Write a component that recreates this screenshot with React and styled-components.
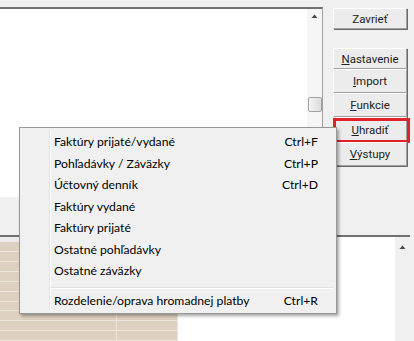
import React from "react";
import styled, { createGlobalStyle } from "styled-components";

const menuItems = [
  { label: "Faktúry prijaté/vydané", key: "Ctrl+F" },
  { label: "Pohľadávky / Záväzky", key: "Ctrl+P" },
  { label: "Účtovný denník", key: "Ctrl+D" },
  { label: "Faktúry vydané" },
  { label: "Faktúry prijaté" },
  { label: "Ostatné pohľadávky" },
  { label: "Ostatné záväzky" },
  { separator: true },
  { label: "Rozdelenie/oprava hromadnej platby", key: "Ctrl+R" },
];

function UpArrow() {
  return (
    <svg width="7" height="4" viewBox="0 0 7 4">
      <path d="M0.5 4 L3.5 0.5 L6.5 4 Z" fill="#4a4a4a" />
    </svg>
  );
}

export default function App() {
  return (
    <Frame>
      <GlobalStyle />
      <TopRow>
        <ListPanel>
          <ScrollBar>
            <UpArrow />
            <Thumb />
          </ScrollBar>
        </ListPanel>
        <ButtonColumn>
          <Button>Zavrieť</Button>
          <ButtonStack>
            <Button><u>N</u>astavenie</Button>
            <Button><u>I</u>mport</Button>
            <Button><u>F</u>unkcie</Button>
            <Button $marked><u>U</u>hradiť</Button>
            <Button><u>V</u>ýstupy</Button>
          </ButtonStack>
        </ButtonColumn>
      </TopRow>

      <LowerPanel>
        <Table>
          <TableHead />
          {Array.from({ length: 10 }).map((_, i) => (
            <TableRow key={i}>
              <Cell />
              <Cell />
            </TableRow>
          ))}
        </Table>
        <Filler />
        <LowerScroll>
          <UpArrow />
        </LowerScroll>
      </LowerPanel>

      <Menu>
        {menuItems.map((item, i) =>
          item.separator ? (
            <Separator key={i} />
          ) : (
            <MenuItem key={i}>
              <span>{item.label}</span>
              <Shortcut>{item.key}</Shortcut>
            </MenuItem>
          )
        )}
      </Menu>
    </Frame>
  );
}

// ...............styled-components..........//

const GlobalStyle = createGlobalStyle`
  body {
    margin: 0;
    background: #f0f0f0;
    font-family: "Liberation Sans", Arial, sans-serif;
  }
`;

const Frame = styled.div`
  position: relative;
  width: 414px;
  height: 341px;
  overflow: hidden;
  background: #f0f0f0;
`;

const TopRow = styled.div`
  display: flex;
  height: 197px;
`;

const ListPanel = styled.div`
  box-sizing: border-box;
  margin-top: 7px;
  width: 323px;
  height: 190px;
  background: #fff;
  border-top: 2px solid #707070;
  border-right: 1px solid #a0a0a0;
  display: flex;
  justify-content: flex-end;
`;

const ScrollBar = styled.div`
  width: 15px;
  background: #f6f6f6;
  display: flex;
  flex-direction: column;
  align-items: center;
  padding-top: 5px;
`;

const Thumb = styled.div`
  box-sizing: border-box;
  margin-top: 79px;
  width: 14px;
  height: 15px;
  border: 1px solid #a2a2a2;
  border-radius: 2px;
  background: linear-gradient(90deg, #f4f4f4, #dcdcdc);
`;

const ButtonColumn = styled.div`
  display: flex;
  flex-direction: column;
  padding: 8px 0 0 10px;
`;

const ButtonStack = styled.div`
  display: flex;
  flex-direction: column;
  margin-top: 19px;
`;

const Button = styled.div`
  position: relative;
  box-sizing: border-box;
  width: 74px;
  height: ${(p) => (p.$marked ? "25px" : "24px")};
  display: flex;
  align-items: center;
  justify-content: center;
  background: #ececec;
  border-top: 1px solid #fff;
  border-left: 1px solid #fff;
  border-right: 1px solid #a0a0a0;
  border-bottom: 1px solid #a0a0a0;
  box-shadow: 1px 1px 0 #696969;
  font-family: Roboto, "Liberation Sans", sans-serif;
  font-size: 11.5px;
  font-weight: 400;
  color: #222;

  &:first-child {
    height: 21px;
  }

  u {
    text-decoration-thickness: 1px;
    text-underline-offset: 1px;
  }

  &::after {
    content: "";
    display: ${(p) => (p.$marked ? "block" : "none")};
    position: absolute;
    left: -1px;
    right: -4px;
    top: 0;
    bottom: -2px;
    border: 3px solid #e0222c;
  }
`;

const LowerPanel = styled.div`
  box-sizing: border-box;
  display: flex;
  margin-top: 38px;
  width: 410px;
  height: 106px;
  background: #fff;
  border-top: 2px solid #707070;
`;

const Table = styled.div`
  width: 178px;
  display: flex;
  flex-direction: column;
  background: #dfd1c2;
`;

const TableHead = styled.div`
  height: 6px;
  background: #ececec;
`;

const TableRow = styled.div`
  display: grid;
  grid-template-columns: 117px 61px;
  height: 10px;
  border-bottom: 1px solid #eee6dd;
`;

const Cell = styled.div`
  border-right: 1px solid #eee6dd;
`;

const Filler = styled.div`
  flex: 1;
`;

const LowerScroll = styled.div`
  width: 15px;
  background: #f0f0f0;
  display: flex;
  flex-direction: column;
  align-items: center;
  padding-top: 8px;
`;

const Menu = styled.div`
  position: absolute;
  left: 19px;
  top: 127px;
  box-sizing: border-box;
  width: 318px;
  padding: 3px 2px 2px;
  background: #f0f0f0;
  border: 1px solid #979797;
  box-shadow: 2px 2px 3px rgba(0, 0, 0, 0.35);
  font-family: Lato, "Open Sans", sans-serif;
  font-size: 12.2px;
  color: #000;

  &::before {
    content: "";
    position: absolute;
    left: 29px;
    top: 2px;
    bottom: 2px;
    width: 1px;
    background: #e2e3e3;
    border-right: 1px solid #fff;
  }
`;

const MenuItem = styled.div`
  display: flex;
  align-items: center;
  justify-content: space-between;
  height: 21.5px;
  padding: 0 16px 0 32px;
  white-space: nowrap;
`;

const Shortcut = styled.span`
  text-align: right;
`;

const Separator = styled.div`
  position: relative;
  height: 8px;

  &::after {
    content: "";
    position: absolute;
    left: 29px;
    right: 1px;
    top: 5px;
    height: 1px;
    background: #e0e0e0;
    border-bottom: 1px solid #fff;
  }
`;
